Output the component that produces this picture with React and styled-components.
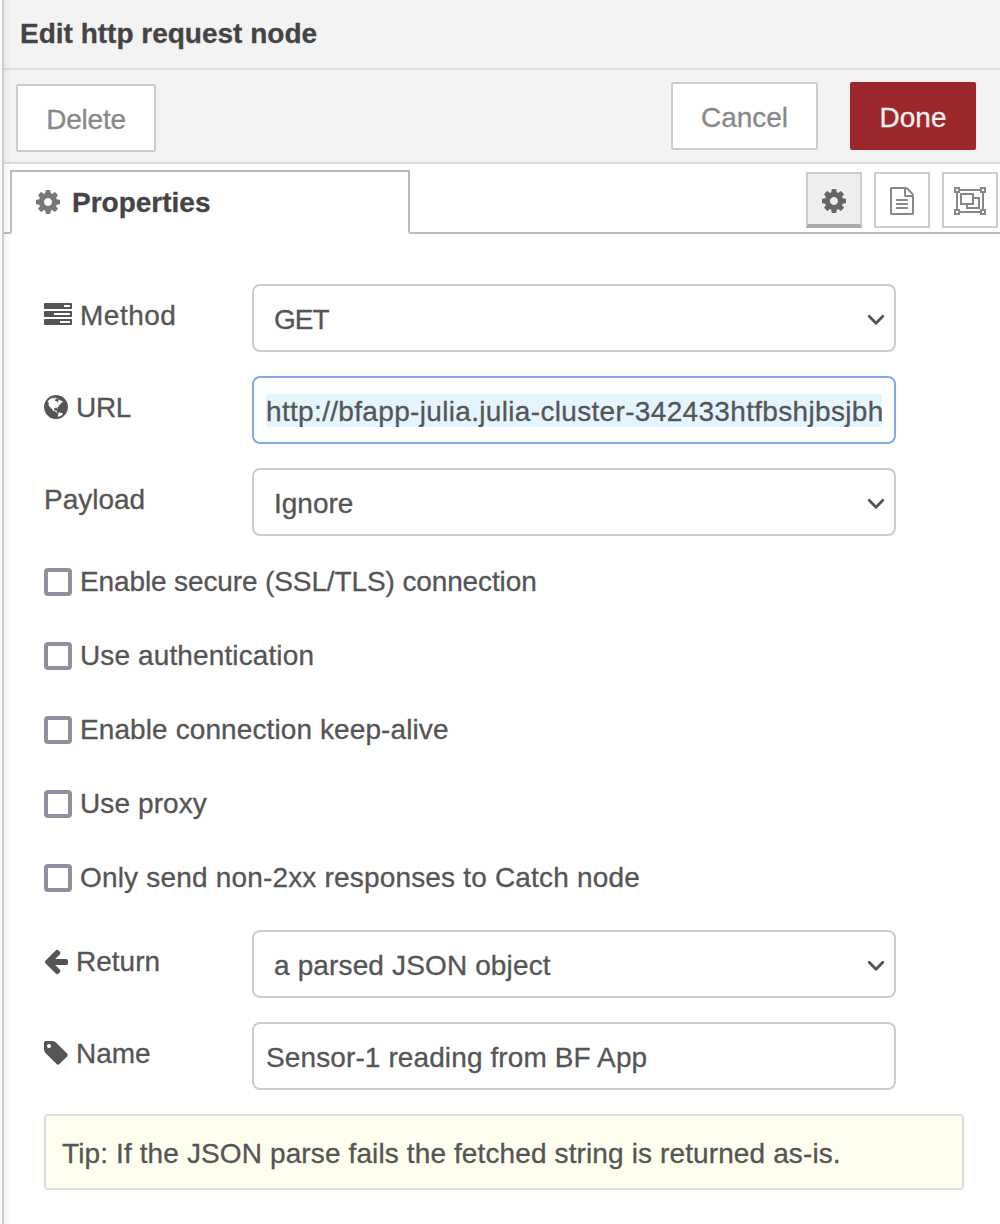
import React from "react";
import styled, { createGlobalStyle, css } from "styled-components";

const GlobalStyle = createGlobalStyle`
  *, *::before, *::after { box-sizing: border-box; }
  body {
    margin: 0;
    background: #fff;
    font-family: "Liberation Sans", Arial, sans-serif;
    font-size: 28px;
    line-height: 40px;
    color: #555;
  }
`;

const Page = styled.div`
  display: flex;
  width: 1000px;
  height: 1224px;
  overflow: hidden;
  background: #fafafa;
  padding-left: 2px;
`;

const Tray = styled.main`
  flex: 1;
  min-width: 0;
  display: flex;
  flex-direction: column;
  border-left: 2px solid #ccc;
  background: #fff;
  position: relative;

  &::after {
    content: "";
    position: absolute;
    inset: 0 auto 0 0;
    width: 8px;
    background: linear-gradient(to right, rgba(0, 0, 0, 0.04), rgba(0, 0, 0, 0));
    pointer-events: none;
  }
`;

const Text = styled.span`
  white-space: pre;
  letter-spacing: ${(p) => p.$ls || 0}px;
  -webkit-text-stroke: 0.3px currentColor;
`;

const Header = styled.header`
  height: 70px;
  padding: 14px 0 0 16px;
  background: #f3f3f3;
  border-bottom: 2px solid #ddd;
  color: #444;
  font-weight: bold;
`;

const Toolbar = styled.div`
  display: flex;
  align-items: flex-start;
  height: 94px;
  padding: 12px 24px 0 12px;
  background: #f3f3f3;
  border-bottom: 2px solid #ddd;
`;

const Button = styled.button`
  display: flex;
  align-items: center;
  justify-content: center;
  width: ${(p) => p.$w}px;
  height: 68px;
  padding: 4px 0 0;
  border: 2px solid #ccc;
  border-radius: 2px;
  background: #fff;
  color: #888;
  font: inherit;
  ${(p) =>
    p.$primary &&
    css`
      margin-left: 32px;
      border-color: #9d282b;
      background: #9d282b;
      color: #eee;
    `}
  ${(p) =>
    p.$start &&
    css`
      margin: 2px auto 0 0;
    `}
`;

const TabBar = styled.nav`
  display: flex;
  height: 70px;
  padding-top: 6px;
`;

const TabEdge = styled.div`
  width: 8px;
  border: solid #bbb;
  border-width: 0 2px 2px 0;
  border-radius: 0 0 3px 0;
`;

const Tab = styled.div`
  display: flex;
  align-items: center;
  gap: 12px;
  width: 396px;
  padding: 0 0 0 24px;
  border-top: 2px solid #bbb;
  color: #444;
  font-weight: bold;
  svg { color: #777; margin-bottom: 2px; }
`;

const TabTools = styled.div`
  flex: 1;
  display: flex;
  justify-content: flex-end;
  gap: 12px;
  padding: 2px 2px 0 0;
  border: solid #bbb;
  border-width: 0 0 2px 2px;
  border-radius: 0 0 0 3px;
`;

const ToolButton = styled.button`
  display: flex;
  align-items: center;
  justify-content: center;
  width: 56px;
  height: 56px;
  padding: 2px 0 0;
  border: 2px solid #ccc;
  background: ${(p) => (p.$active ? "#eee" : "#fff")};
  color: ${(p) => (p.$active ? "#666" : "#888")};
  ${(p) => p.$active && "border-bottom: 4px solid #aaa; padding: 4px 0 0;"}
`;

const Form = styled.form`
  display: flex;
  flex-direction: column;
  gap: 24px;
  padding: 50px 36px 0 40px;
`;

const Row = styled.div`
  display: flex;
  align-items: flex-start;
`;

const Label = styled.label`
  display: flex;
  width: 208px;
  height: 68px;
  padding-top: 12px;
  gap: 8px;
  svg { margin-top: 7px; }
`;

const Field = styled.div`
  display: flex;
  align-items: center;
  justify-content: space-between;
  width: 644px;
  height: 68px;
  padding: 4px 9px 0 ${(p) => (p.$select ? 20 : 12)}px;
  border: 2px solid ${(p) => (p.$focus ? "#80aae8" : "#ccc")};
  border-radius: 8px;
  background: #fff;
  svg { margin-bottom: 1px; }
`;

const Selected = styled.div`
  width: 616px;
  height: 33px;
  line-height: 36px;
  overflow: hidden;
  margin-bottom: 3px;
  background: #e5f5ff;
`;

const Checks = styled.div`
  display: flex;
  flex-direction: column;
  gap: 46px;
  padding: 8px 0 14px;
`;

const CheckRow = styled.label`
  display: flex;
  align-items: center;
  height: 28px;
  gap: 8px;
`;

const Box = styled.input.attrs({ type: "checkbox" })`
  appearance: none;
  flex: none;
  width: 28px;
  height: 28px;
  margin: 0;
  border: 4px solid #8f8f9d;
  border-radius: 4px;
  background: #fff;
`;

const Tip = styled.div`
  height: 76px;
  padding: 18px 16px 0;
  border: 2px solid #ddd;
  border-radius: 4px;
  background: #ffffef;
`;

const Glyph = styled.svg`
  flex: none;
  overflow: visible;
`;

const PATHS = {
  cog: "M1152 896q0-106-75-181t-181-75-181 75-75 181 75 181 181 75 181-75 75-181zm512-109v222q0 12-8 23t-20 13l-185 28q-19 54-39 91 35 50 107 138 10 12 10 25t-9 23q-27 37-99 108t-94 71q-12 0-26-9l-138-108q-44 23-91 38-16 136-29 186-7 28-36 28h-222q-14 0-24.5-8.5t-11.5-21.5l-28-184q-49-16-90-37l-141 107q-10 9-25 9-14 0-25-11-126-114-165-168-7-10-7-23 0-12 8-23 15-21 51-66.5t54-70.5q-27-50-41-99l-183-27q-13-2-21-12.5t-8-23.5v-222q0-12 8-23t19-13l186-28q14-46 39-92-40-57-107-138-10-12-10-24 0-10 9-23 26-36 98.5-107.5t94.5-71.5q13 0 26 10l138 107q44-23 91-38 16-136 29-186 7-28 36-28h222q14 0 24.5 8.5t11.5 21.5l28 184q49 16 90 37l142-107q9-9 24-9 13 0 25 10 129 119 165 170 7 8 7 22 0 12-8 23-15 21-51 66.5t-54 70.5q26 50 41 98l183 28q13 2 21 12.5t8 23.5z",
  file: "M1596 380q28 28 48 76t20 88v1152q0 40-28 68t-68 28h-1344q-40 0-68-28t-28-68v-1600q0-40 28-68t68-28h896q40 0 88 20t76 48zm-444-244v376h376q-10-29-22-41l-313-313q-12-12-41-22zm384 1528v-1024h-416q-40 0-68-28t-28-68v-416h-768v1536h1280zm-1024-864q0-14 9-23t23-9h704q14 0 23 9t9 23v64q0 14-9 23t-23 9h-704q-14 0-23-9t-9-23v-64zm736 224q14 0 23 9t9 23v64q0 14-9 23t-23 9h-704q-14 0-23-9t-9-23v-64q0-14 9-23t23-9h704zm0 256q14 0 23 9t9 23v64q0 14-9 23t-23 9h-704q-14 0-23-9t-9-23v-64q0-14 9-23t23-9h704z",
  tasks: "M1024 1408h640v-128h-640v128zm-384-512h1024v-128h-1024v128zm640-512h384v-128h-384v128zm512 832v256q0 26-19 45t-45 19h-1664q-26 0-45-19t-19-45v-256q0-26 19-45t45-19h1664q26 0 45 19t19 45zm0-512v256q0 26-19 45t-45 19h-1664q-26 0-45-19t-19-45v-256q0-26 19-45t45-19h1664q26 0 45 19t19 45zm0-512v256q0 26-19 45t-45 19h-1664q-26 0-45-19t-19-45v-256q0-26 19-45t45-19h1664q26 0 45 19t19 45z",
  arrow: "M1664 896v128q0 53-32.5 90.5t-84.5 37.5h-704l293 294q38 36 38 90t-38 90l-75 76q-37 37-90 37-52 0-91-37l-651-652q-37-37-37-90 0-52 37-91l651-650q38-38 91-38 52 0 90 38l75 74q38 38 38 91t-38 91l-293 293h704q52 0 84.5 37.5t32.5 90.5z",
  tag: "M576 448q0-53-37.5-90.5t-90.5-37.5-90.5 37.5-37.5 90.5 37.5 90.5 90.5 37.5 90.5-37.5 37.5-90.5zm1067 576q0 53-37 90l-491 492q-39 37-91 37-53 0-90-37l-715-716q-38-37-64.5-101t-26.5-117v-416q0-52 38-90t90-38h416q53 0 117 26.5t102 64.5l715 714q37 39 37 91z",
  globe: "M896 128q209 0 385.5 103t279.5 279.5 103 385.5-103 385.5-279.5 279.5-385.5 103-385.5-103-279.5-279.5-103-385.5 103-385.5 279.5-279.5 385.5-103zm274 521q-2 1-9.5 9.5t-13.5 9.5q2 0 4.5-5t5-11 3.5-7q6-7 22-15 14-6 52-12 34-8 51 11-2-2 9.5-13t14.5-12q3-2 15-4.5t15-7.5l2-22q-12 1-17.5-7t-6.5-21q0 2-6 8 0-7-4.5-8t-11.5 1-9 1q-10-3-15-7.5t-8-16.5-4-15q-2-5-9.5-11t-9.5-10q-1-2-2.5-5.5t-3-6.5-4-5.5-5.5-2.5-7 5-7.5 10-4.5 5q-3-2-6-1.5t-4.5 1-4.5 3-5 3.5q-3 2-8.5 3t-8.5 2q15-5-1-11-10-4-16-3 9-4 7.5-12t-8.5-14h5q-1-4-8.5-8.5t-17.5-8.5-13-6q-8-5-34-9.5t-33-.5q-5 6-4.5 10.5t4 14 3.5 12.5q1 6-5.5 13t-6.5 12q0 7 14 15.5t10 21.5q-3 8-16 16t-16 12q-5 8-1.5 18.5t10.5 16.5q2 2 1.5 4t-3.5 4.5-5.5 4-6.5 3.5l-3 2q-11 5-20.5-6t-13.5-26q-7-25-16-30-23-8-29 1-5-13-41-26-25-9-58-4 6-1 0-15-7-15-19-12 3-6 4-17.5t1-13.5q3-13 12-23 1-1 7-8.5t9.5-13.5.5-6q35 4 50-11 5-5 11.5-17t10.5-17q9-6 14-5.5t14.5 5.5 14.5 5q14 1 15.5-11t-7.5-20q12 1 3-17-4-7-8-9-12-4-27 5-8 4 2 8-1-1-9.5 10.5t-16.5 17.5-16-5q-1-1-5.5-13.5t-9.5-13.5q-8 0-16 15 3-8-11-15t-24-8q19-12-8-27-7-4-20.5-5t-19.5 4q-5 7-5.5 11.5t5 8 10.5 5.5 11.5 4 8.5 3q14 10 8 14-2 1-8.5 3.5t-11.5 4.5-6 4q-3 4 0 14t-2 14q-5-5-9-17.5t-7-16.5q7 9-25 6l-10-1q-4 0-16 2t-20.5 1-13.5-8q-4-8 0-20 1-4 4-2-4-3-11-9.5t-10-8.5q-46 15-94 41 6 1 12-1 5-2 13-6.5t10-5.5q34-14 42-7l5-5q14 16 20 25-7-4-30-1-20 6-22 12 7 12 5 18-4-3-11.5-10t-14.5-11-15-5q-16 0-22 1-146 80-235 222 7 7 12 8 4 1 5 9t2.5 11 11.5-3q9 8 3 19 1-1 44 27 19 17 21 21 3 11-10 18-1-2-9-9t-9-4q-3 5 .5 18.5t10.5 12.5q-7 0-9.5 16t-2.5 35.5-1 23.5l2 1q-3 12 5.5 34.5t21.5 19.5q-13 3 20 43 6 8 8 9 3 2 12 7.5t15 10 10 10.5q4 5 10 22.5t14 23.5q-2 6 9.5 20t10.5 23q-1 0-2.5 1t-2.5 1q3 7 15.5 14t15.5 13q1 3 2 10t3 11 8 2q2-20-24-62-15-25-17-29-3-5-5.5-15.5t-4.5-14.5q2 0 6 1.5t8.5 3.5 7.5 4 2 3q-3 7 2 17.5t12 18.5 17 19 12 13q6 6 14 19.5t0 13.5q9 0 20 10.5t17 19.5q5 8 8 26t5 24q2 7 8.5 13.5t12.5 9.5l16 8 13 7q5 2 18.5 10.5t21.5 11.5q10 4 16 4t14.5-2.5 13.5-3.5q15-2 29 15t21 21q36 19 55 11-2 1 .5 7.5t8 15.5 9 14.5 5.5 8.5q5 6 18 15t18 15q6-4 7-9-3 8 7 20t18 10q14-3 14-32-31 15-49-18 0-1-2.5-5.5t-4-8.5-2.5-8.5 0-7.5 5-3q9 0 10-3.5t-2-12.5-4-13q-1-8-11-20t-12-15q-5 9-16 8t-16-9q0 1-1.5 5.5t-1.5 6.5q-13 0-15-1 1-3 2.5-17.5t3.5-22.5q1-4 5.5-12t7.5-14.5 4-12.5-4.5-9.5-17.5-2.5q-19 1-26 20-1 3-3 10.5t-5 11.5-9 7q-7 3-24 2t-24-5q-13-8-22.5-29t-9.5-37q0-10 2.5-26.5t3-25-5.5-24.5q3-2 9-9.5t10-10.5q2-1 4.5-1.5t4.5 0 4-1.5 3-6q-1-1-4-3-3-3-4-3 7 3 28.5-1.5t27.5 1.5q15 11 22-2 0-1-2.5-9.5t-.5-13.5q5 27 29 9 3 3 15.5 5t17.5 5q3 2 7 5.5t5.5 4.5 5-.5 8.5-6.5q10 14 12 24 11 40 19 44 7 3 11 2t4.5-9.5 0-14-1.5-12.5l-1-8v-18l-1-8q-15-3-18.5-12t1.5-18.5 15-18.5q1-1 8-3.5t15.5-6.5 12.5-8q21-19 15-35 7 0 11-9-1 0-5-3t-7.5-5-4.5-2q9-5 2-16 5-3 7.5-11t7.5-10q9 12 21 2 8-8 1-16 5-7 20.5-10.5t18.5-9.5q7 2 8-2t1-12 3-12q4-5 15-9t13-5l17-11q3-4 0-4 18 2 31-11 10-11-6-20 3-6-3-9.5t-15-5.5q3-1 11.5-.5t10.5-1.5q15-10-7-16-17-5-43 12zm-163 877q206-36 351-189-3-3-12.5-4.5t-12.5-3.5q-18-7-24-8 1-7-2.5-13t-8-9-12.5-8-11-7q-2-2-7-6t-7-5.5-7.5-4.5-8.5-2-10 1l-3 1q-3 1-5.5 2.5t-5.5 3-4 3 0 2.5q-21-17-36-22-5-1-11-5.5t-10.5-7-10-1.5-11.5 7q-5 5-6 15t-2 13q-7-5 0-17.5t2-18.5q-3-6-10.5-4.5t-12 4.5-11.5 8.5-9 6.5-8.5 5.5-8.5 7.5q-3 4-6 12t-5 11q-2-4-11.5-6.5t-9.5-5.5q2 10 4 35t5 38q7 31-12 48-27 25-29 40-4 22 12 26 0 7-8 20.5t-7 21.5q0 6 2 16z",
};

function Icon({ name, box, w, h }) {
  return (
    <Glyph width={w} height={h} viewBox={box} fill="currentColor" aria-hidden="true">
      <path d={PATHS[name]} />
    </Glyph>
  );
}

const Cog = () => <Icon name="cog" box="128 128 1536 1536" w={24} h={24} />;

const GroupIcon = () => (
  <Glyph width="32" height="28" viewBox="0 0 32 28" fill="none" stroke="currentColor" strokeWidth="2" aria-hidden="true">
    <path d="M6 3H26M6 25H26M3 6V22M29 6V22" />
    <path d="M1 1h4v4h-4zM27 1h4v4h-4zM1 23h4v4h-4zM27 23h4v4h-4z" />
    <path d="M7 7h12v10h-12zM20 11h5v10h-12v-3" />
  </Glyph>
);

const Chevron = () => (
  <Glyph width="18" height="12" viewBox="0 0 18 12" fill="none" stroke="#555" strokeWidth="2.8" strokeLinecap="round" strokeLinejoin="round" aria-hidden="true">
    <path d="M2.2 2.2 9 9.2 15.8 2.2" />
  </Glyph>
);

const CHECKS = [
  ["Enable secure (SSL/TLS) connection", -0.12],
  ["Use authentication", 0.12],
  ["Enable connection keep-alive", 0.1],
  ["Use proxy", 0.1],
  ["Only send non-2xx responses to Catch node", 0.18],
];

export default function App() {
  return (
    <Page>
      <GlobalStyle />
      <Tray>
        <Header><Text>Edit http request node</Text></Header>
        <Toolbar>
          <Button $w={140} $start><Text $ls={-0.2}>Delete</Text></Button>
          <Button $w={147}><Text>Cancel</Text></Button>
          <Button $w={126} $primary><Text>Done</Text></Button>
        </Toolbar>
        <TabBar>
          <TabEdge />
          <Tab><Cog /><Text>Properties</Text></Tab>
          <TabTools>
            <ToolButton $active><Cog /></ToolButton>
            <ToolButton><Icon name="file" box="128 0 1536 1792" w={24} h={28} /></ToolButton>
            <ToolButton><GroupIcon /></ToolButton>
          </TabTools>
        </TabBar>
        <Form>
          <Row>
            <Label><Icon name="tasks" box="0 128 1792 1408" w={28} h={22} /><Text $ls={0.5}>Method</Text></Label>
            <Field $select><Text $ls={-1}>GET</Text><Chevron /></Field>
          </Row>
          <Row>
            <Label><Icon name="globe" box="128 128 1536 1536" w={24} h={24} /><Text $ls={-0.3}>URL</Text></Label>
            <Field $focus><Selected><Text $ls={0.33}>http://bfapp-julia.julia-cluster-342433htfbshjbsjbh</Text></Selected></Field>
          </Row>
          <Row>
            <Label><Text>Payload</Text></Label>
            <Field $select><Text>Ignore</Text><Chevron /></Field>
          </Row>
          <Checks>
            {CHECKS.map(([text, ls]) => (
              <CheckRow key={text}><Box /><Text $ls={ls}>{text}</Text></CheckRow>
            ))}
          </Checks>
          <Row>
            <Label><Icon name="arrow" box="128 128 1536 1536" w={24} h={24} /><Text>Return</Text></Label>
            <Field $select><Text $ls={0.14}>a parsed JSON object</Text><Chevron /></Field>
          </Row>
          <Row>
            <Label><Icon name="tag" box="128 128 1536 1536" w={24} h={24} /><Text>Name</Text></Label>
            <Field><Text $ls={0.11}>Sensor-1 reading from BF App</Text></Field>
          </Row>
          <Tip><Text $ls={0.12}>Tip: If the JSON parse fails the fetched string is returned as-is.</Text></Tip>
        </Form>
      </Tray>
    </Page>
  );
}
